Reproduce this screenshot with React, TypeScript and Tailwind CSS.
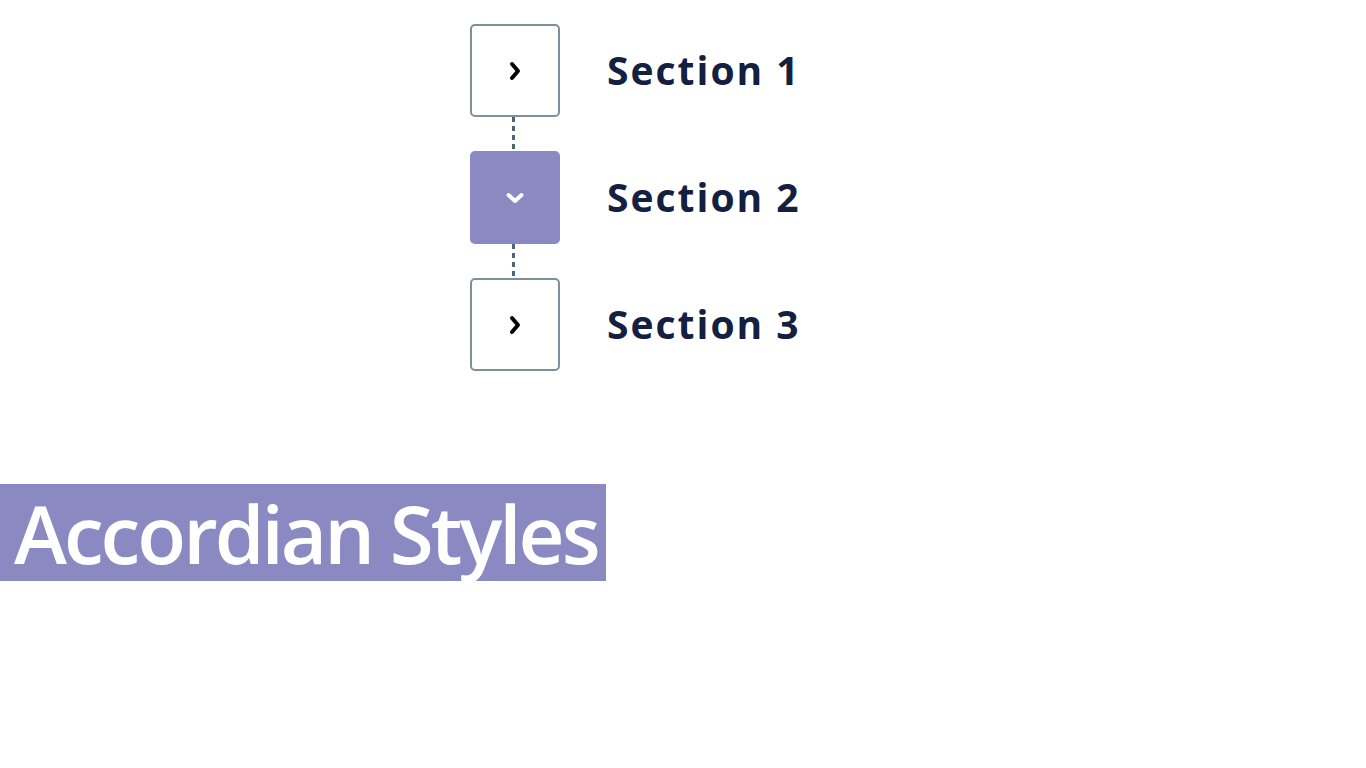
import React from 'react';

const sections = [
  { id: 1, title: 'Section 1', open: false },
  { id: 2, title: 'Section 2', open: true },
  { id: 3, title: 'Section 3', open: false },
];

function Chevron({ open }: { open: boolean }) {
  return (
    <svg width="24" height="24" viewBox="0 0 24 24" fill="none">
      {open ? (
        <path d="M5.5 9 L12 15 L18.5 9" stroke="#ffffff" strokeWidth="4" strokeLinecap="round" strokeLinejoin="round" />
      ) : (
        <path d="M9 5 L15 12 L9 19" stroke="#000000" strokeWidth="4" strokeLinecap="round" strokeLinejoin="round" />
      )}
    </svg>
  );
}

export default function App() {
  return (
    <div className="min-h-screen w-[1366px] h-[768px] bg-white overflow-hidden">
      {/* Accordion steps */}
      <div className="pl-[470px] pt-[24px] flex flex-col">
        {sections.map((s, i) => (
          <div key={s.id} className="flex flex-col">
            {i > 0 && (
              <div className="w-[90px] h-[34px] flex justify-center">
                <div className="w-[3px] h-full -ml-[3px] bg-[repeating-linear-gradient(to_bottom,#4f6575_0px,#4f6575_5px,transparent_5px,transparent_9px)]" />
              </div>
            )}
            <div className="flex items-center">
              <button
                className={
                  s.open
                    ? 'w-[90px] h-[93px] rounded-[5px] bg-[#8a89c2] flex items-center justify-center'
                    : 'w-[90px] h-[93px] rounded-[5px] border-2 border-[#7d8f9c] bg-white flex items-center justify-center'
                }
              >
                <Chevron open={s.open} />
              </button>
              <span
                className="ml-[47px] text-[39px] font-bold tracking-[2px] text-[#14203f]"
                style={{ fontFamily: '"Open Sans", "DejaVu Sans", sans-serif' }}
              >
                {s.title}
              </span>
            </div>
          </div>
        ))}
      </div>

      {/* Title banner */}
      <div className="mt-[113px] w-[606px] h-[97px] bg-[#8a89c2] flex items-center pl-[14px]">
        <h1
          className="text-[80px] leading-none font-semibold text-white tracking-[-3px]"
          style={{ fontFamily: '"Open Sans", "Noto Sans", sans-serif' }}
        >
          Accordian Styles
        </h1>
      </div>
    </div>
  );
}
